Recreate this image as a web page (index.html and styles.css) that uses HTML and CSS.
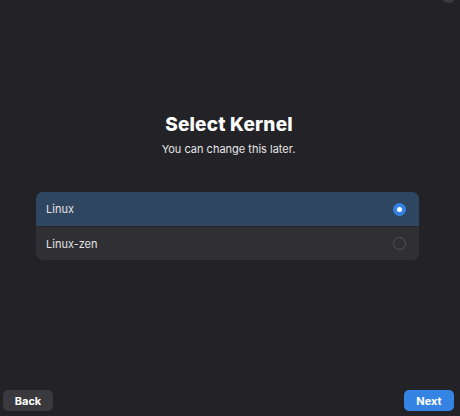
FILE: index.html
```html
<!DOCTYPE html>
<html>
<head>
<meta charset="utf-8">
<link rel="stylesheet" href="styles.css">
</head>
<body>
<div class="page">
  <div class="corner"></div>
  <div class="content">
    <h1 class="title">Select Kernel</h1>
    <p class="subtitle">You can change this later.</p>
    <div class="list">
      <div class="row selected">
        <span class="label">Linux</span>
        <span class="radio on"></span>
      </div>
      <div class="row">
        <span class="label">Linux-zen</span>
        <span class="radio"></span>
      </div>
    </div>
  </div>
  <div class="footer">
    <button class="btn back">Back</button>
    <button class="btn next">Next</button>
  </div>
</div>
</body>
</html>
```
FILE: styles.css
```css
html, body {
  margin: 0;
  padding: 0;
  background: #232327;
}
body {
  font-family: Inter, "Noto Sans", "Liberation Sans", sans-serif;
  color: #ffffff;
}
.page {
  position: relative;
  width: 460px;
  height: 416px;
  display: flex;
  flex-direction: column;
  overflow: hidden;
}
.corner {
  position: absolute;
  top: -12px;
  right: 4px;
  width: 15px;
  height: 15px;
  border-radius: 50%;
  background: #3a3a3e;
}
.content {
  padding-top: 113px;
  display: flex;
  flex-direction: column;
}
.title {
  margin: 0;
  text-align: center;
  font-size: 19px;
  line-height: 24px;
  font-weight: 800;
  letter-spacing: 0.2px;
  padding-right: 2px;
}
.subtitle {
  margin: 5px 0 0;
  text-align: center;
  font-size: 11px;
  line-height: 14px;
  color: #e6e6e6;
  padding-right: 3px;
}
.list {
  margin: 36px 0 0 36px;
  width: 383px;
  border-radius: 7px;
  overflow: hidden;
  background: #303034;
}
.row {
  height: 34px;
  display: flex;
  align-items: center;
  justify-content: space-between;
  padding: 0 13px 0 10px;
}
.row.selected {
  background: #2f4661;
}
.row + .row {
  border-top: 1px solid #27272b;
  height: 33px;
}
.label {
  font-size: 11px;
  color: #e3e3e6;
}
.radio {
  width: 11px;
  height: 11px;
  border-radius: 50%;
  border: 1.5px solid #555559;
  box-sizing: content-box;
}
.radio.on {
  border-color: #3584e4;
  background: #3584e4;
  position: relative;
}
.radio.on::after {
  content: "";
  position: absolute;
  left: 3px;
  top: 3px;
  width: 5px;
  height: 5px;
  border-radius: 50%;
  background: #ffffff;
}
.footer {
  margin-top: auto;
  display: flex;
  justify-content: space-between;
  padding: 0 6px 5px 3px;
}
.btn {
  width: 50px;
  height: 21px;
  border: none;
  border-radius: 5px;
  font-family: Inter, "Noto Sans", "Liberation Sans", sans-serif;
  font-size: 11px;
  font-weight: 700;
  color: #ffffff;
  padding: 0;
}
.back {
  background: #3a3a3e;
}
.next {
  background: #3584e4;
}
```
